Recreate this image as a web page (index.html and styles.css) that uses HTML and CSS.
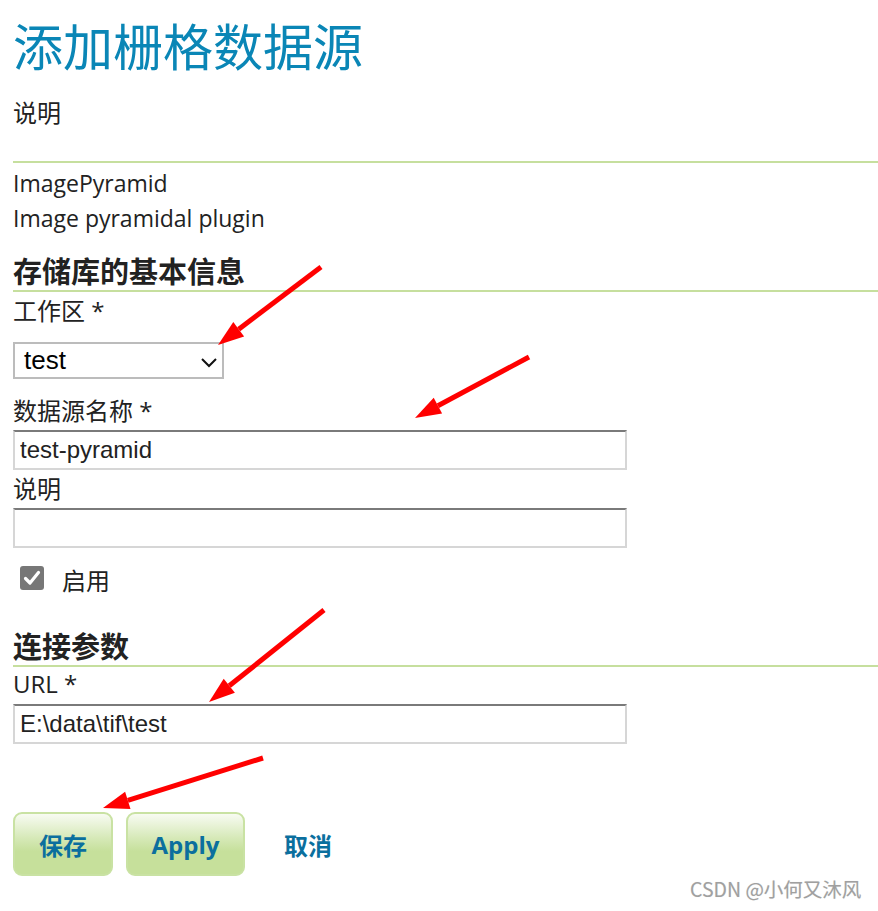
FILE: index.html
```html
<!DOCTYPE html>
<html lang="zh">
<head>
<meta charset="utf-8">
<title>添加栅格数据源</title>
<link rel="stylesheet" href="styles.css">
</head>
<body>
<div class="page">
  <h1 class="title">添加栅格数据源</h1>
  <p class="desc-label">说明</p>
  <div class="store-info">
    <div class="line">ImagePyramid</div>
    <div class="line">Image pyramidal plugin</div>
  </div>

  <h3 class="section">存储库的基本信息</h3>
  <label class="field-label">工作区 *</label>
  <div class="select">
    <span>test</span>
    <svg class="chev" width="18" height="12" viewBox="0 0 18 12"><path d="M2 3 L9 10 L16 3" fill="none" stroke="#111" stroke-width="2"/></svg>
  </div>

  <label class="field-label gap-top">数据源名称 *</label>
  <input class="text-input" type="text" value="test-pyramid">
  <label class="field-label">说明</label>
  <input class="text-input" type="text" value="">

  <div class="check-row">
    <span class="checkbox"><svg width="24" height="24" viewBox="0 0 24 24"><path d="M5.5 12.5 L10 17 L18.5 6.5" fill="none" stroke="#fff" stroke-width="3.2" stroke-linecap="round" stroke-linejoin="round"/></svg></span>
    <span class="check-label">启用</span>
  </div>

  <h3 class="section section-2">连接参数</h3>
  <label class="field-label url-label">URL *</label>
  <input class="text-input url" type="text" value="E:\data\tif\test">

  <div class="buttons">
    <button class="btn btn-save">保存</button>
    <button class="btn btn-apply">Apply</button>
    <a class="cancel">取消</a>
  </div>
</div>

<svg class="annotations" width="878" height="911" viewBox="0 0 878 911">
  <g stroke="#ff0000" stroke-width="5" stroke-linecap="butt" fill="#ff0000">
    <line x1="321" y1="267" x2="238.7" y2="329.3"/>
    <polygon stroke="none" points="218,345 244.1,336.5 233.3,322.1"/>
    <line x1="529" y1="357" x2="437.9" y2="405.7"/>
    <polygon stroke="none" points="415,418 442.1,413.6 433.7,397.8"/>
    <line x1="324" y1="610" x2="229.3" y2="685.8"/>
    <polygon stroke="none" points="209,702 234.9,692.8 223.7,678.8"/>
    <line x1="263" y1="758" x2="127.8" y2="800.3"/>
    <polygon stroke="none" points="103,808 130.5,808.9 125.1,791.7"/>
  </g>
</svg>
<div class="watermark">CSDN @小何又沐风</div>
</body>
</html>
```
FILE: styles.css
```css
html, body {
  margin: 0;
  padding: 0;
  background: #fff;
}
body {
  font-family: "Open Sans", "Noto Sans CJK SC", sans-serif;
  color: #222;
  width: 878px;
  height: 911px;
  overflow: hidden;
  position: relative;
}
.page {
  padding-left: 13px;
  display: flex;
  flex-direction: column;
  align-items: flex-start;
}
.title {
  margin: 14px 0 0 0;
  height: 60px;
  font-family: "Noto Sans CJK SC", sans-serif;
  font-weight: 400;
  font-size: 50px;
  line-height: 60px;
  color: #0a86b6;
}
.desc-label {
  margin: 22px 0 0 0;
  height: 34px;
  font-size: 24px;
  line-height: 34px;
}
.store-info {
  margin-top: 31px;
  border-top: 2px solid #c6df9e;
  padding-top: 3px;
  align-self: stretch;
}
.line {
  height: 35px;
  font-size: 23px;
  line-height: 35px;
}
.section {
  margin: 19px 0 0 0;
  height: 34px;
  align-self: stretch;
  font-size: 29px;
  font-weight: 700;
  line-height: 34px;
  border-bottom: 2px solid #c6df9e;
  padding-bottom: 1px;
  color: #222;
}
.section-2 {
  margin-top: 35px;
}
.field-label {
  display: block;
  height: 34px;
  margin-top: 2px;
  font-size: 24px;
  line-height: 34px;
}
.field-label.gap-top {
  margin-top: 15px;
}
.field-label.url-label {
  margin-top: 0;
}
.select {
  margin-top: 14px;
  box-sizing: border-box;
  width: 211px;
  height: 37px;
  border: 2px solid #bcbcbc;
  display: flex;
  align-items: center;
  justify-content: space-between;
  padding: 0 4px 0 9px;
  font-family: "Liberation Sans", Arial, sans-serif;
  font-size: 26px;
  color: #000;
}
.chev {
  margin-top: 2px;
}
.text-input {
  margin: 2px 0 0 0;
  box-sizing: border-box;
  width: 614px;
  height: 40px;
  border: 2px solid #d6d6d6;
  border-top-color: #7a7a7a;
  padding: 0 0 0 5px;
  font-family: "Liberation Sans", Arial, sans-serif;
  font-size: 24px;
  color: #222;
  outline: none;
}
.text-input.url {
  margin-top: 3px;
}
.check-row {
  margin-top: 13px;
  height: 34px;
  display: flex;
  align-items: center;
  padding-left: 7px;
}
.checkbox {
  width: 24px;
  height: 24px;
  border-radius: 3px;
  background: #777;
  display: flex;
}
.check-label {
  margin-left: 18px;
  height: 34px;
  font-size: 24px;
  line-height: 34px;
  padding-top: 5px;
}
.buttons {
  margin-top: 68px;
  display: flex;
  align-items: center;
  gap: 13px;
}
.btn {
  box-sizing: border-box;
  height: 64px;
  border: 2px solid #c9e2a3;
  border-radius: 9px;
  background: linear-gradient(to bottom, #f8fbf2 0%, #d6e9b8 40%, #c6e09b 62%, #c6e09b 100%);
  font-family: "Open Sans", "Noto Sans CJK SC", sans-serif;
  font-weight: 700;
  font-size: 24px;
  color: #0b6f9e;
  padding: 0;
}
.btn-save {
  width: 100px;
}
.btn-apply {
  width: 119px;
}
.cancel {
  margin-left: 26px;
  font-weight: 700;
  font-size: 24px;
  color: #0b6f9e;
  font-family: "Noto Sans CJK SC", sans-serif;
}
.annotations {
  position: absolute;
  left: 0;
  top: 0;
  pointer-events: none;
}
.watermark {
  position: absolute;
  left: 690px;
  top: 877px;
  font-family: "Noto Sans CJK SC", sans-serif;
  font-size: 19.5px;
  line-height: 24px;
  color: #a0a0a0;
  text-shadow: 0 0 1px #ddd;
}
```
